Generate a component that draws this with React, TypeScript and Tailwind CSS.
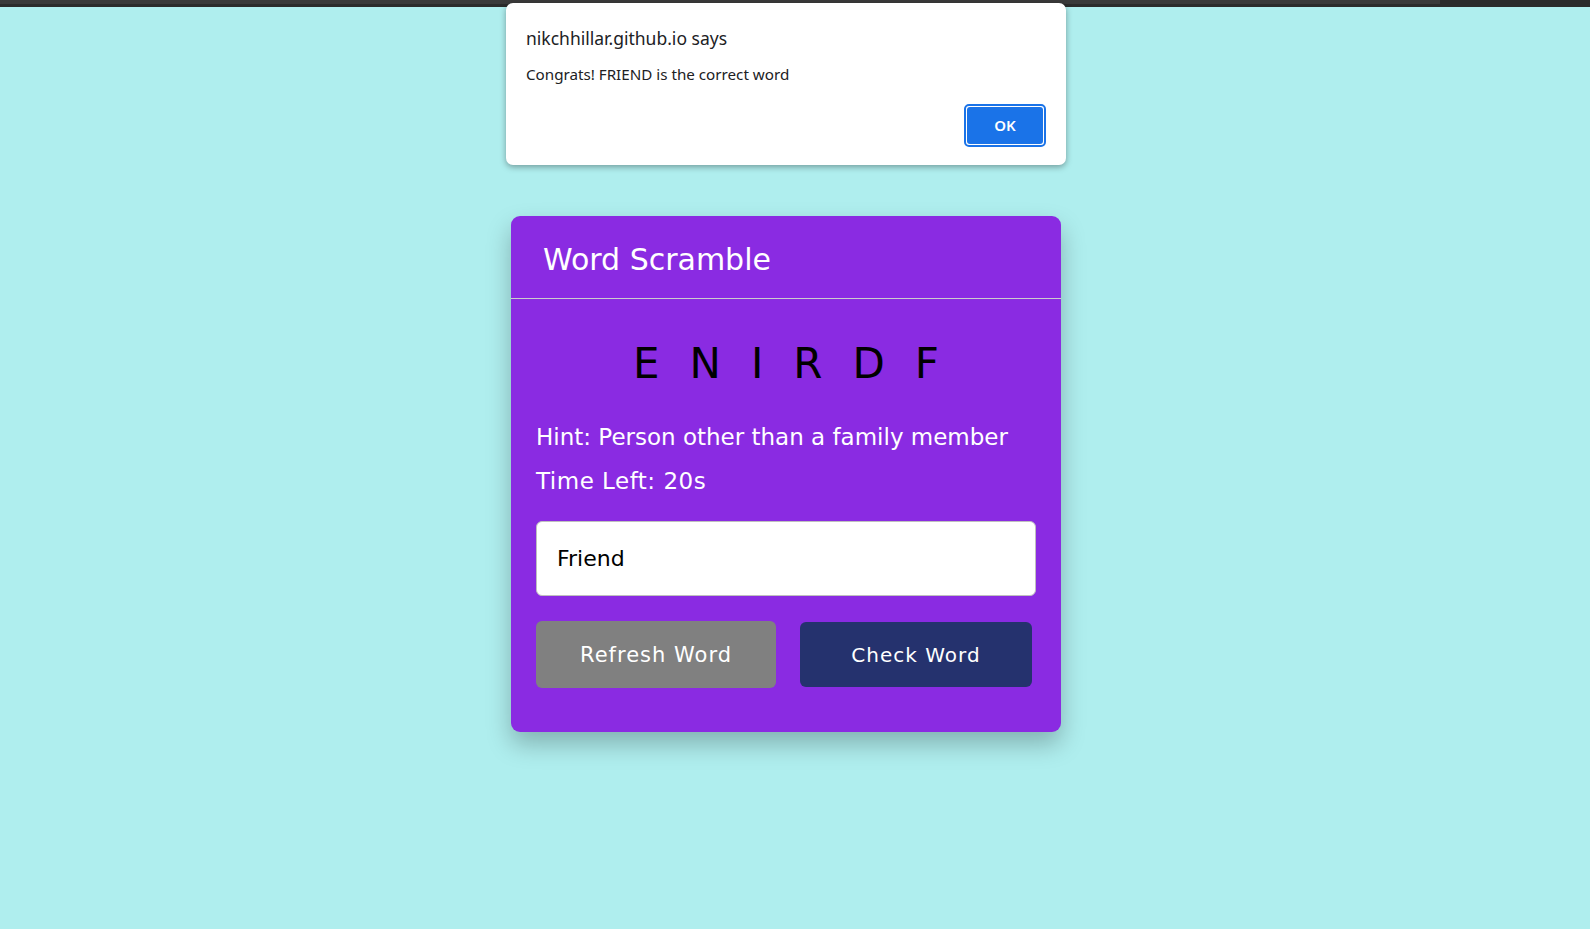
import React from "react";

export default function App() {
  const comic = { fontFamily: '"Comic Sans MS", "DejaVu Sans", sans-serif' };
  return (
    <div className="relative min-h-[929px] w-full bg-[#afeeee] overflow-hidden">
      {/* browser top strip */}
      <div className="h-[7px] w-full bg-[#2b2b2b] flex">
        <div className="h-[4px] w-[1440px] bg-[#3a3a3a]" />
      </div>

      {/* card */}
      <div className="flex justify-center pr-[18px] pt-[209px]">
        <div
          className="w-[550px] rounded-[9px] bg-[#8a2be2] shadow-[0_12px_25px_rgba(0,0,0,0.25)]"
          style={comic}
        >
          <h2 className="h-[83px] flex items-center pt-[5px] px-[32px] border-b border-[#ccc] text-[30px] text-white leading-none">
            Word Scramble
          </h2>
          <div className="mx-[25px] mt-[33px] mb-[44px]">
            <p className="text-center text-[42px] leading-[64px] h-[64px] tracking-[30px] mr-[-30px] text-black">
              ENIRDF
            </p>
            <div className="mt-[26px] mb-[24px] text-white text-[23px]">
              <p className="leading-[31px] mb-[13px]">Hint: Person other than a family member</p>
              <p className="leading-[31px] tracking-[0.5px]">Time Left: 20s</p>
            </div>
            <div className="h-[75px] w-full rounded-[6px] border border-[#bfbfbf] bg-white flex items-center px-[20px] text-[22px] text-black">
              Friend
            </div>
            <div className="mt-[25px] flex justify-between items-center">
              <button
                className="w-[240px] h-[67px] pt-[3px] rounded-[6px] bg-[#808080] text-white text-[21px] tracking-[1px]"
                style={comic}
              >
                Refresh Word
              </button>
              <button
                className="w-[232px] h-[65px] pt-[1px] mr-[4px] rounded-[6px] bg-[#25326e] text-white text-[20px] tracking-[1px]"
                style={comic}
              >
                Check Word
              </button>
            </div>
          </div>
        </div>
      </div>

      {/* alert dialog */}
      <div
        className="absolute left-[506px] top-[3px] w-[560px] h-[162px] rounded-[7px] bg-white shadow-[0_2px_6px_rgba(0,0,0,0.35)]"
        style={{ fontFamily: '"Noto Sans", "Open Sans", sans-serif' }}
      >
        <div className="pl-[20px] pt-[23px]">
          <div className="text-[17.5px] leading-[24px] text-[#202124]">nikchhillar.github.io says</div>
          <div className="mt-[13px] text-[15.2px] leading-[22px] text-[#202124]">
            Congrats! FRIEND is the correct word
          </div>
        </div>
        <div className="absolute left-[458px] top-[101px] w-[82px] h-[43px] rounded-[5px] border-2 border-[#1a73e8] p-[1px] bg-white">
          <div className="w-full h-full rounded-[3px] bg-[#1a73e8] flex items-center justify-center text-white text-[15px] font-semibold">
            OK
          </div>
        </div>
      </div>
    </div>
  );
}
